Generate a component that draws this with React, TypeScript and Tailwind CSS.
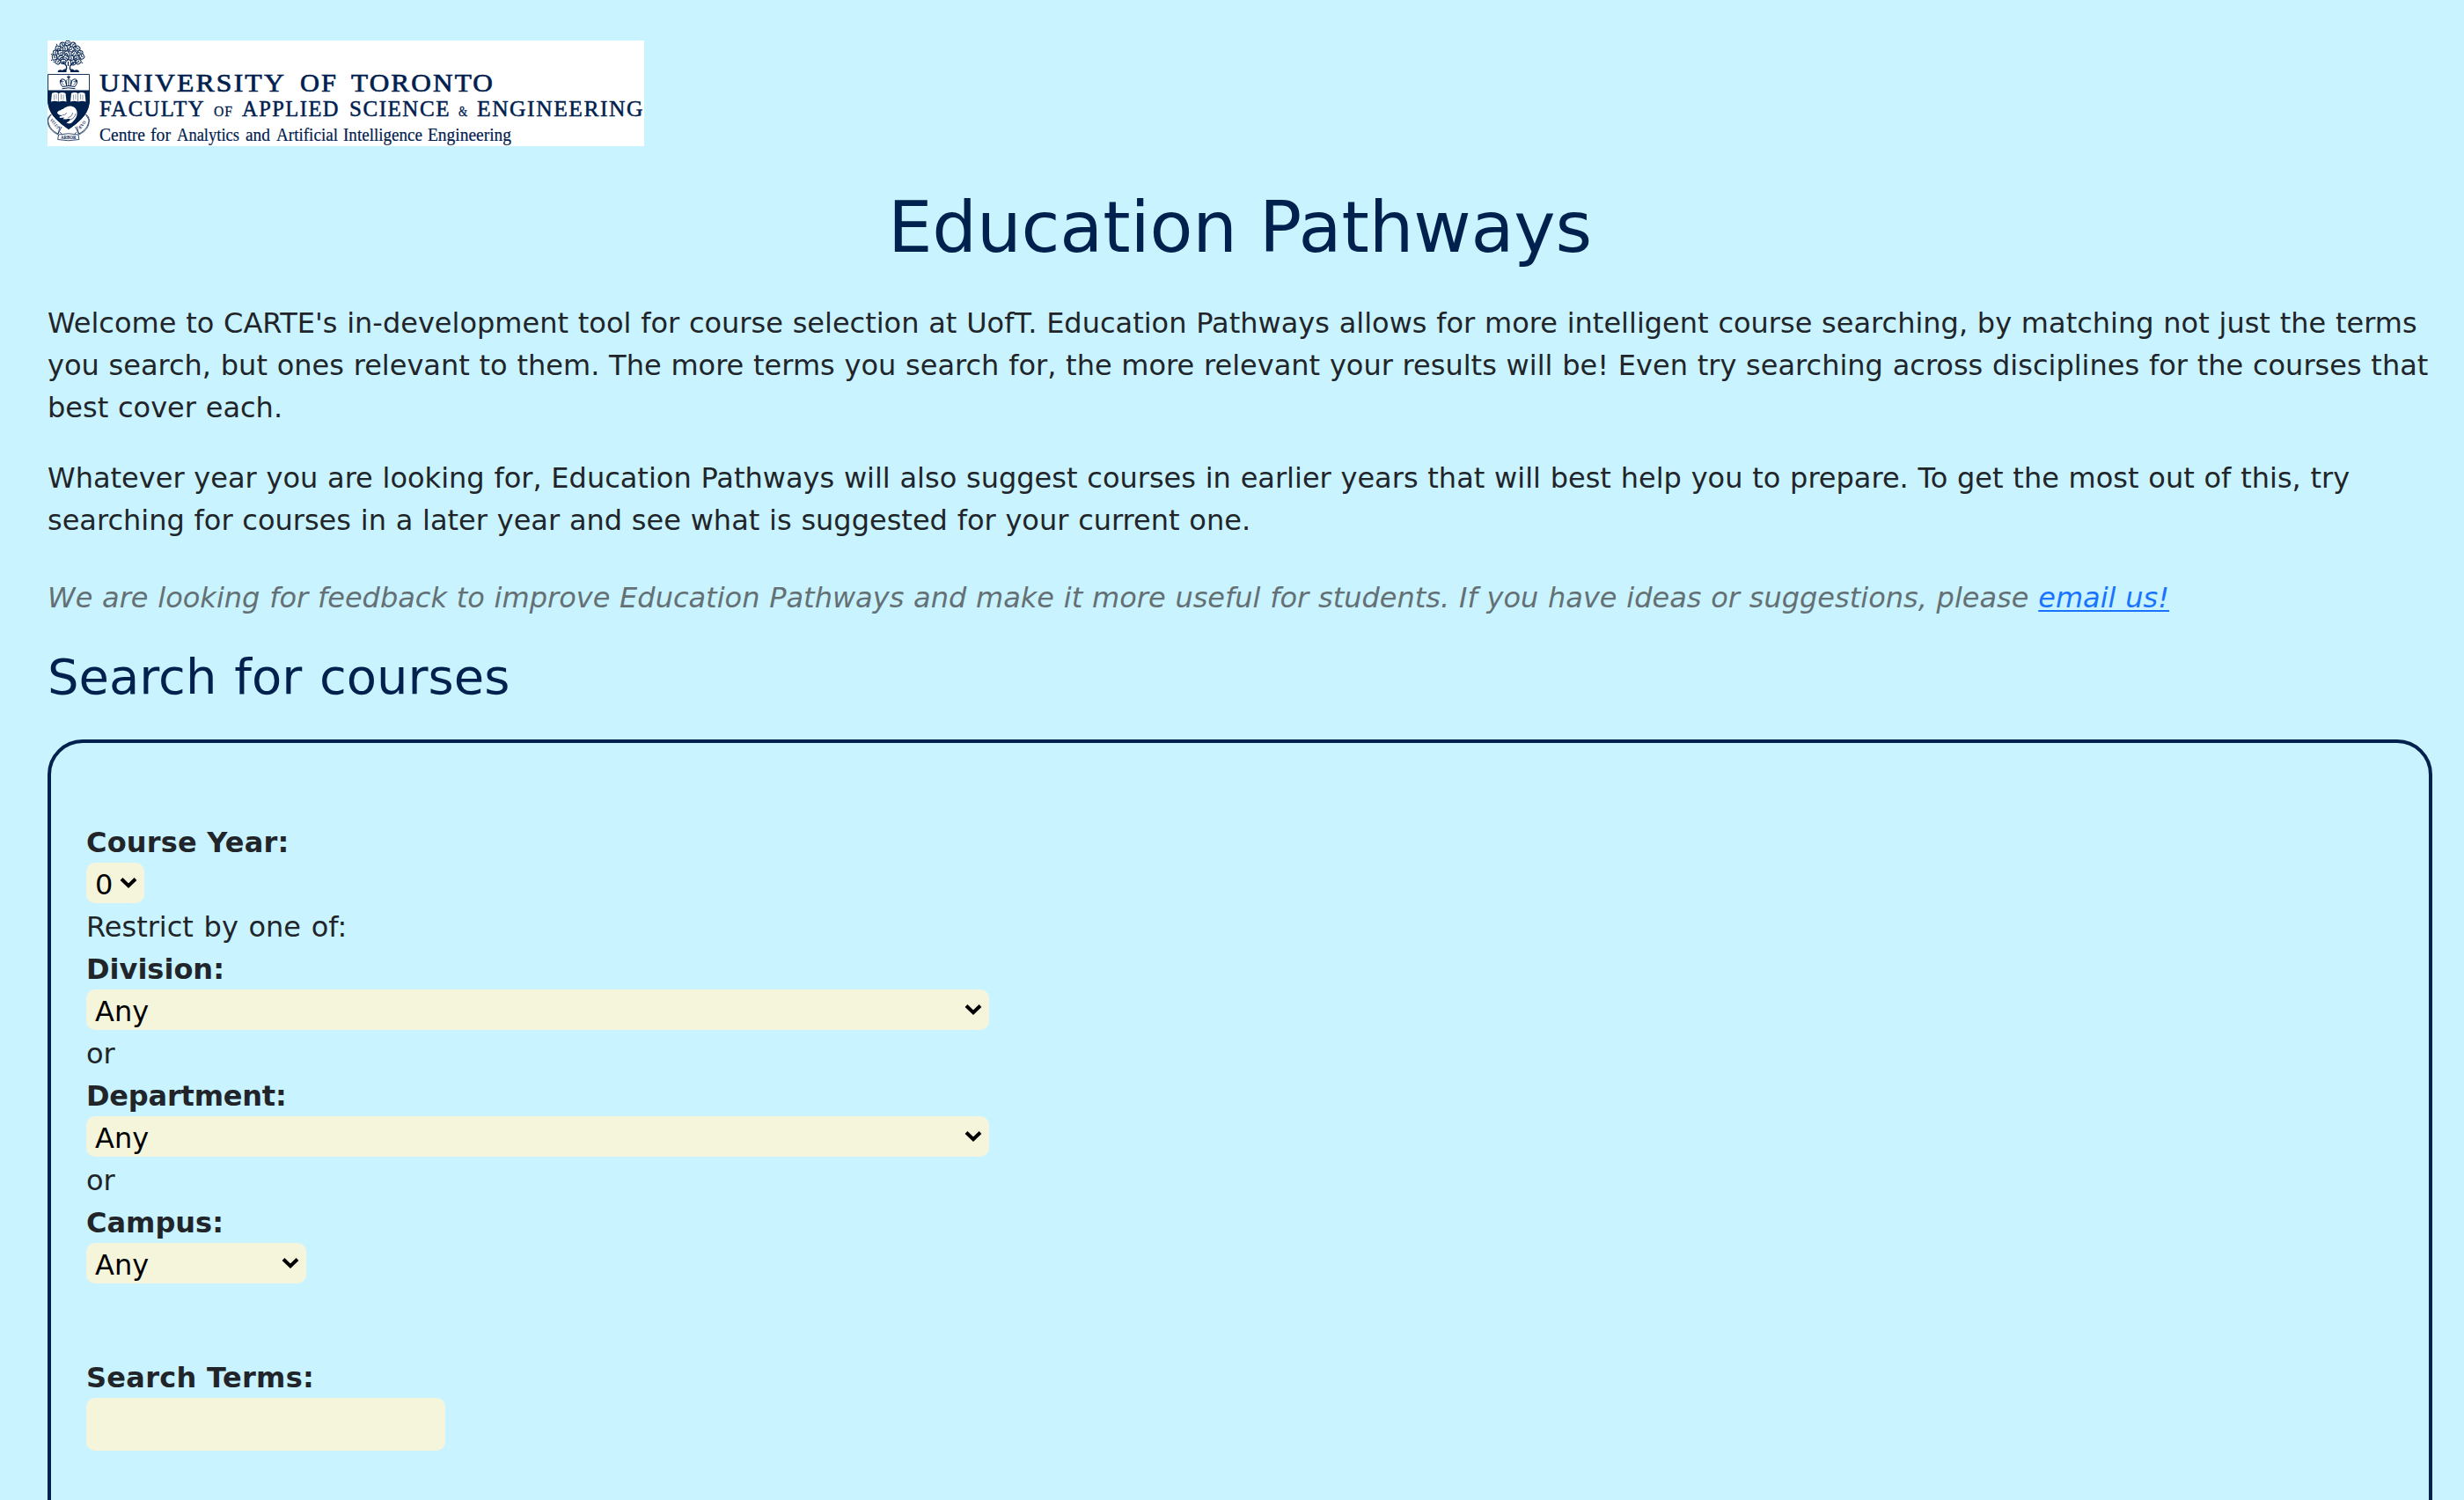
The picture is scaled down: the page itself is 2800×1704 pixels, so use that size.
import type { ReactNode } from "react";

const NAVY = "#00204e";

type Word = [text: string, x: number, width: number];

const universityWords: Word[] = [
  ["UNIVERSITY", 59, 212],
  ["OF", 287, 43],
  ["TORONTO", 345, 163],
];
const facultyWords: Word[] = [
  ["FACULTY", 59, 120],
  ["APPLIED", 221, 111],
  ["SCIENCE", 343, 115],
  ["ENGINEERING", 488, 190],
];
const smallFacultyWords: Word[] = [
  ["OF", 189, 22],
  ["&", 467, 11],
];
const centreWords: Word[] = [
  ["Centre", 59, 52],
  ["for", 117, 23],
  ["Analytics", 147, 71],
  ["and", 225, 28],
  ["Artificial", 260, 70],
  ["Intelligence", 336, 90],
  ["Engineering", 432, 95],
];

interface WordsProps {
  words: Word[];
  y: number;
  size: number;
  stroke?: number;
  spacing?: number;
}

function Words({ words, y, size, stroke = 0, spacing = 0 }: WordsProps) {
  return (
    <g fontSize={size} fill={NAVY} stroke={NAVY} strokeWidth={stroke} letterSpacing={spacing}>
      {words.map(([text, x, width]) => (
        <text key={text + x} x={x} y={y} textLength={width} lengthAdjust="spacingAndGlyphs">
          {text}
        </text>
      ))}
    </g>
  );
}

const leaves: [number, number][] = [
  [23, 3], [17, 5], [29, 5], [12, 9], [20, 9], [27, 10], [34, 9], [9, 14], [15, 14], [22, 15], [30, 15],
  [37, 14], [8, 19], [15, 20], [21, 20], [27, 20], [33, 20], [39, 18], [12, 24], [18, 24], [29, 25], [35, 24],
];

function Crest() {
  return (
    <g stroke={NAVY} fill="none" strokeWidth="1">
      <g strokeWidth="1">
        {leaves.map(([x, y], i) => (
          <g key={`${x}-${y}`} transform={`translate(${x} ${y}) rotate(${i * 67})`}>
            <path d="M-3 0c0-2.500 2-3.200 3-2.200 1.500-1 3.400.3 2.800 2.200 1 1.500-.8 3-2.300 2.300-1.500 1.200-3.500 0-3.500-2.300z" fill="#fff" />
            <path d="M-2.600-.5l2.200.8 1.800-1M2.500 3l1 1.200" />
          </g>
        ))}
      </g>
      <path d="M20.500 34c2.300-3 1.600-7-4-9.500M26.500 34c-2.300-3-1.300-7 4.500-9.500M23.500 24v5" strokeWidth="1.300" />
      <path d="M11.500 36c0-2.600 3-3.600 5.500-2 1.500-1.500 3.500-2 4.500-.5v2.500zM36 36c0-2.600-3-3.600-5.500-2-1.500-1.500-3.500-2-4.500-.5v2.500z" fill={NAVY} stroke="none" />

      <path d="M.5 89c-1.200 8 3 14 11.500 18M47 89c1.200 8-3 14-11.500 18" strokeWidth=".7" />
      <path d="M5 84c-4 1-5 4-4 7M42.500 84c4 1 5 4 4 7" strokeWidth=".8" />
      <path d="M4 84l-3.500 6c0 7 5 13 11.500 16l4-8M43.500 84l3.500 6c0 7-5 13-11.500 16l-4-8" fill="#fff" strokeWidth=".8" />
      <path d="M14 97.500l-2 9M33.500 97.500l2 9M14 104l3 3M33 104l-3 3" strokeWidth=".7" />
      <path d="M12.500 107q11.300-2.500 22.500 0l.8 5.500q-12 2.500-24.100 0z" fill="#fff" strokeWidth=".8" />
      <g fill={NAVY} stroke="none" fontWeight="700">
        <text x="15" y="112.200" fontSize="5.500" textLength="17.500" lengthAdjust="spacingAndGlyphs">ARBOR</text>
        <text transform="translate(2.800 90.500) rotate(52)" fontSize="5" textLength="13.500" lengthAdjust="spacingAndGlyphs">VELUT</text>
        <text transform="translate(37 101.500) rotate(-52)" fontSize="5" textLength="11" lengthAdjust="spacingAndGlyphs">ÆVO</text>
      </g>

      <path d="M.5 38.500h47V66c0 17-10 25-23.500 34.500C10.500 91 .5 83 .5 66z" fill="#fff" strokeWidth=".9" />
      <path d="M.5 57h47v9c0 17-10 25-23.500 34.500C10.500 91 .5 83 .5 66z" fill={NAVY} />

      <path d="M16.500 54.800q7.300-2 15 0M17 52.500q7-2 14 0" />
      <path d="M17 52.500c-5-6-2-9.500 1-8.500s4 4 3.500 7.500M31 52.500c5-6 2-9.500-1-8.500s-4 4-3.500 7.500M24 42v9.500M22 44.500c-2 2-1 5 0 7M26 44.500c2 2 1 5 0 7" />
      <path d="M18.500 51c-3-3-2-5 0-4.500M29.500 51c3-3 2-5 0-4.500" strokeWidth=".7" />
      <path d="M24 39.500v4M22 41.500h4" />
      <circle cx="15.500" cy="46" r=".8" fill={NAVY} />
      <circle cx="32.500" cy="46" r=".8" fill={NAVY} />

      <g fill="#fff" stroke="none">
        <path d="M5 60q4-2 7.500 0v9.500q-4-1.500-8.500 0zM20.500 60q-4-2-7.500 0v9.500q4-1.500 8.500 0z" />
        <path d="M27 60q4-2 7.500 0v9.500q-4-1.500-8.500 0zM42.500 60q-4-2-7.500 0v9.500q4-1.500 8.500 0z" />
        <path d="M11 82c.5-1.500 2.500-2.500 4-2.700 1-1 2-1.500 2.500-1.300 3-2.500 6.500-4 10-3.300 4.500 1 6.700 5 6 9.500-.5 4-3.500 6.500-5.500 8.800-1.500 1.800-5 1.500-6.500.3 1.500-.3 3.500-1.800 4.500-3.800l-2-.8-3 .8-3.500-.2 1.500-1.800-5 .5-.5-1.500 3.500-1.300c-2-.2-5.500-.7-6-3.200z" />
      </g>
      <path d="M7.500 61.500v6M10 61v6M15.500 61v6M18 61.500v6M29.500 61.500v6M32 61v6M37.500 61v6M40 61.500v6" strokeWidth=".7" opacity=".6" />
      <path d="M17 84.500c2 .5 4-.5 4.500-2.500M23.500 87.500c2.500-.5 5-2.500 5-5.500M26 90c3-1 5.500-3.500 6-7" strokeWidth=".6" />
    </g>
  );
}

function Logo() {
  return (
    <svg
      width="678"
      height="120"
      viewBox="0 0 678 120"
      className="block bg-white font-['Liberation_Serif',serif]"
      role="img"
      aria-label="University of Toronto, Faculty of Applied Science & Engineering"
    >
      <Crest />
      <Words words={universityWords} y={58} size={29.5} stroke={0.7} spacing={2} />
      <Words words={facultyWords} y={86.3} size={24.5} stroke={0.5} spacing={1.5} />
      <Words words={smallFacultyWords} y={85.5} size={16.5} stroke={0.3} spacing={1} />
      <Words words={centreWords} y={114} size={20.5} stroke={0.2} />
    </svg>
  );
}

function Label({ children, className = "" }: { children: ReactNode; className?: string }) {
  return <div className={`h-12 leading-[50px] whitespace-nowrap ${className}`}>{children}</div>;
}

function Select({ value, width }: { value: string; width: string }) {
  return (
    <div className="h-12">
      <button
        className={`flex h-[46px] items-start justify-between rounded-[10px] bg-[#f5f5dc] pr-2 pl-[10px] text-black ${width}`}
      >
        <span className="pt-1 leading-[42px]">{value}</span>
        <svg width="20" height="14" viewBox="0 0 20 14" className="mt-[15.5px]" fill="none">
          <path d="M2 2.500l8 7.800 8-7.800" stroke="#000" strokeWidth="4" />
        </svg>
      </button>
    </div>
  );
}

export default function App() {
  return (
    <div className="h-[1704px] overflow-hidden bg-[#c8f3ff] pt-[46px] pr-9 pl-[54px] font-['DejaVu_Sans',sans-serif] text-[32px] leading-[48px] text-[#212529]">
      <Logo />
      <h1 className="mt-[45px] text-center text-[80px] leading-[96px] tracking-[-0.16px] text-[#00204e]">
        Education Pathways
      </h1>
      <p className="mt-9 [word-spacing:0.6px]">
        Welcome to CARTE's in-development tool for course selection at UofT. Education Pathways allows for more
        intelligent course searching, by matching not just the terms you search, but ones relevant to them. The more
        terms you search for, the more relevant your results will be! Even try searching across disciplines for the
        courses that best cover each.
      </p>
      <p className="mt-8 [word-spacing:0.6px]">
        Whatever year you are looking for, Education Pathways will also suggest courses in earlier years that will best
        help you to prepare. To get the most out of this, try searching for courses in a later year and see what is
        suggested for your current one.
      </p>
      <p className="mt-10 text-[#647073] italic [word-spacing:0.6px]">
        We are looking for feedback to improve Education Pathways and make it more useful for students. If you have
        ideas or suggestions, please{" "}
        <a href="#email" className="text-[#1a73ff] underline decoration-2 underline-offset-[3px] [text-decoration-skip-ink:none]">
          email us!
        </a>
      </p>
      <h2 className="mt-8 text-[56px] leading-[67px] text-[#00204e] [word-spacing:2px]">Search for courses</h2>
      <form className="mt-[38px] h-[1000px] rounded-[40px] border-4 border-[#00204e] px-10 pt-[88px]">
        <Label className="font-bold tracking-[0.2px]">Course Year:</Label>
        <Select value="0" width="w-[66px]" />
        <Label className="[word-spacing:1.5px]">Restrict by one of:</Label>
        <Label className="font-bold">Division:</Label>
        <Select value="Any" width="w-[1026px]" />
        <Label>or</Label>
        <Label className="font-bold tracking-[-0.2px]">Department:</Label>
        <Select value="Any" width="w-[1026px]" />
        <Label>or</Label>
        <Label className="font-bold">Campus:</Label>
        <Select value="Any" width="w-[250px]" />
        <Label className="mt-20 font-bold tracking-[0.3px]">Search Terms:</Label>
        <input className="block h-[60px] w-[408px] rounded-[10px] bg-[#f5f5dc] px-3" aria-label="Search Terms" />
      </form>
    </div>
  );
}
